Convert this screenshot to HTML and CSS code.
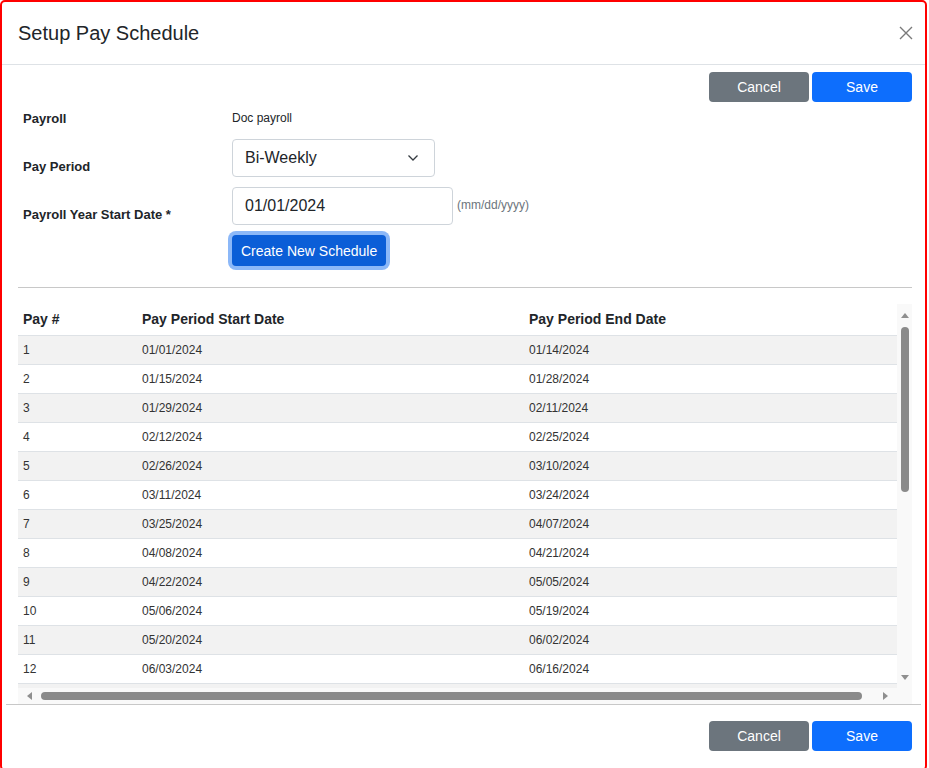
FILE: index.html
```html
<!DOCTYPE html>
<html>
<head>
<meta charset="utf-8">
<title>Setup Pay Schedule</title>
<link rel="stylesheet" href="styles.css">
</head>
<body>
<div class="modal">
  <div class="modal-header">
    <h1 class="modal-title">Setup Pay Schedule</h1>
    <button class="close" aria-label="Close">
      <svg width="14" height="14" viewBox="0 0 14 14"><path d="M1 1L13 13M13 1L1 13" stroke="#7a7a7a" stroke-width="1.4" fill="none"/></svg>
    </button>
  </div>
  <div class="modal-body">
    <div class="actions">
      <button class="btn btn-secondary">Cancel</button>
      <button class="btn btn-primary">Save</button>
    </div>
    <div class="form">
      <div class="form-row row-payroll">
        <div class="label">Payroll</div>
        <div class="value text">Doc payroll</div>
      </div>
      <div class="form-row row-field">
        <div class="label">Pay Period</div>
        <div class="value">
          <div class="select">
            <span>Bi-Weekly</span>
            <svg width="12" height="8" viewBox="0 0 12 8"><path d="M1.5 1.5L6 6L10.5 1.5" stroke="#343a40" stroke-width="1.3" fill="none"/></svg>
          </div>
        </div>
      </div>
      <div class="form-row row-field">
        <div class="label">Payroll Year Start Date *</div>
        <div class="value inline">
          <input class="input" type="text" value="01/01/2024">
          <span class="hint">(mm/dd/yyyy)</span>
        </div>
      </div>
      <div class="form-row row-button">
        <div class="label"></div>
        <div class="value"><button class="btn btn-create">Create New Schedule</button></div>
      </div>
    </div>
    <hr class="divider">
    <div class="scrollbox">
      <div class="viewport">
        <table class="grid">
          <colgroup><col class="c1"><col class="c2"><col class="c3"></colgroup>
          <thead><tr><th>Pay #</th><th>Pay Period Start Date</th><th>Pay Period End Date</th></tr></thead>
          <tbody>
            <tr><td>1</td><td>01/01/2024</td><td>01/14/2024</td></tr>
            <tr><td>2</td><td>01/15/2024</td><td>01/28/2024</td></tr>
            <tr><td>3</td><td>01/29/2024</td><td>02/11/2024</td></tr>
            <tr><td>4</td><td>02/12/2024</td><td>02/25/2024</td></tr>
            <tr><td>5</td><td>02/26/2024</td><td>03/10/2024</td></tr>
            <tr><td>6</td><td>03/11/2024</td><td>03/24/2024</td></tr>
            <tr><td>7</td><td>03/25/2024</td><td>04/07/2024</td></tr>
            <tr><td>8</td><td>04/08/2024</td><td>04/21/2024</td></tr>
            <tr><td>9</td><td>04/22/2024</td><td>05/05/2024</td></tr>
            <tr><td>10</td><td>05/06/2024</td><td>05/19/2024</td></tr>
            <tr><td>11</td><td>05/20/2024</td><td>06/02/2024</td></tr>
            <tr><td>12</td><td>06/03/2024</td><td>06/16/2024</td></tr>
            <tr class="row-empty"><td></td><td></td><td></td></tr>
          </tbody>
        </table>
      </div>
      <div class="vbar">
        <div class="arrow arrow-v">
          <svg width="8" height="5" viewBox="0 0 8 5"><path d="M0 5L4 0L8 5Z" fill="#8f8f8f"/></svg>
        </div>
        <div class="vtrack"><div class="vthumb"></div></div>
        <div class="arrow arrow-v">
          <svg width="8" height="5" viewBox="0 0 8 5"><path d="M0 0L4 5L8 0Z" fill="#8f8f8f"/></svg>
        </div>
      </div>
      <div class="hbar">
        <div class="arrow arrow-left">
          <svg width="5" height="8" viewBox="0 0 5 8"><path d="M5 0L0 4L5 8Z" fill="#8f8f8f"/></svg>
        </div>
        <div class="htrack"><div class="hthumb"></div></div>
        <div class="arrow arrow-right">
          <svg width="5" height="8" viewBox="0 0 5 8"><path d="M0 0L5 4L0 8Z" fill="#8f8f8f"/></svg>
        </div>
      </div>
      <div class="corner"></div>
    </div>
  </div>
  <div class="modal-footer">
    <button class="btn btn-secondary">Cancel</button>
    <button class="btn btn-primary">Save</button>
  </div>
</div>
</body>
</html>
```

FILE: styles.css
```css
html, body {
  margin: 0;
  padding: 0;
  overflow: hidden;
  background: #ffffff;
}
body {
  font-family: "Liberation Sans", Arial, sans-serif;
  color: #212529;
}
.modal {
  width: 927px;
  height: 771px;
  box-sizing: border-box;
  border: 2px solid #ff0000;
  border-radius: 5px;
  background: #fff;
  display: flex;
  flex-direction: column;
}
.modal-header {
  height: 62px;
  border-bottom: 1px solid #dee2e6;
  display: flex;
  align-items: center;
  justify-content: space-between;
  padding: 0 12px 0 16px;
  flex-shrink: 0;
}
.modal-title {
  margin: 0;
  font-size: 20px;
  font-weight: normal;
  color: #212529;
  line-height: 24px;
}
.close {
  border: 0;
  background: transparent;
  padding: 0;
  width: 14px;
  height: 14px;
  display: flex;
}
.modal-body {
  padding: 0 13px 0 16px;
  flex-shrink: 0;
}
.actions {
  display: flex;
  justify-content: flex-end;
  gap: 3px;
  margin-top: 7px;
}
.btn {
  font-family: "Liberation Sans", Arial, sans-serif;
  font-size: 14px;
  border: 0;
  border-radius: 4px;
  color: #fff;
  padding: 0;
  cursor: pointer;
}
.btn-secondary, .btn-primary {
  width: 100px;
  height: 30px;
}
.btn-secondary { background: #6c757d; }
.btn-primary { background: #0d6efd; }
.form {
  margin-top: 9px;
}
.form-row {
  display: flex;
}
.label {
  width: 209px;
  padding-left: 5px;
  font-size: 13px;
  font-weight: bold;
  line-height: 15px;
  color: #212529;
  flex-shrink: 0;
}
.row-payroll {
  height: 15px;
  margin-bottom: 13px;
}
.text {
  font-size: 12px;
  line-height: 15px;
  color: #212529;
}
.row-field {
  height: 38px;
  margin-bottom: 10px;
}
.row-field .label {
  padding-top: 20px;
}
.inline {
  display: flex;
  align-items: center;
  gap: 4px;
}
.select {
  width: 203px;
  height: 38px;
  box-sizing: border-box;
  border: 1px solid #ced4da;
  border-radius: 4px;
  display: flex;
  align-items: center;
  justify-content: space-between;
  padding: 0 15px 0 12px;
  font-size: 16px;
  color: #212529;
}
.input {
  width: 221px;
  height: 38px;
  box-sizing: border-box;
  border: 1px solid #ced4da;
  border-radius: 4px;
  padding: 0 12px;
  font-family: "Liberation Sans", Arial, sans-serif;
  font-size: 16px;
  color: #212529;
  margin: 0;
}
.hint {
  font-size: 12px;
  color: #6c757d;
  margin-top: -2px;
}
.row-button {
  height: 31px;
}
.btn-create {
  height: 31px;
  padding: 0 9px;
  background: #0b5ed7;
  box-shadow: 0 0 0 4px #8cb8f8;
}
.divider {
  margin: 21px 0 0 0;
  border: 0;
  border-top: 1px solid #c8c8c8;
  height: 0;
}
.scrollbox {
  margin-top: 16px;
  display: grid;
  grid-template-columns: 879px 15px;
  grid-template-rows: 384px 16px;
}
.viewport {
  overflow: hidden;
}
.grid {
  table-layout: fixed;
  width: 891px;
  border-collapse: collapse;
}
.c1 { width: 119px; }
.c2 { width: 387px; }
.c3 { width: 385px; }
.grid th {
  text-align: left;
  font-size: 14px;
  font-weight: bold;
  padding: 0 5px;
  height: 31px;
  line-height: 31px;
  border-bottom: 1px solid #dee2e6;
  color: #212529;
}
.grid td {
  font-size: 12px;
  padding: 0 5px;
  height: 28px;
  line-height: 28px;
  border-bottom: 1px solid #dee2e6;
  color: #333;
}
.grid tbody tr:nth-child(odd) td {
  background: #f2f2f2;
}
.vbar {
  background: #f9f9f9;
  display: flex;
  flex-direction: column;
}
.arrow {
  display: flex;
  align-items: center;
  justify-content: center;
  flex-shrink: 0;
}
.arrow-v {
  height: 22px;
}
.vtrack {
  flex: 1;
  padding-top: 1px;
  display: flex;
  justify-content: center;
}
.vthumb {
  width: 8px;
  height: 165px;
  border-radius: 4px;
  background: #8a8a8a;
}
.hbar {
  background: #f9f9f9;
  display: flex;
}
.arrow-left {
  width: 23px;
}
.arrow-right {
  width: 24px;
}
.htrack {
  flex: 1;
  display: flex;
  align-items: center;
}
.hthumb {
  width: 821px;
  height: 8px;
  border-radius: 4px;
  background: #8a8a8a;
}
.corner {
  background: #f9f9f9;
}
.modal-footer {
  margin: 0 4px;
  border-top: 1px solid #c8c8c8;
  display: flex;
  justify-content: flex-end;
  gap: 3px;
  padding: 16px 9px 0 0;
}
```
